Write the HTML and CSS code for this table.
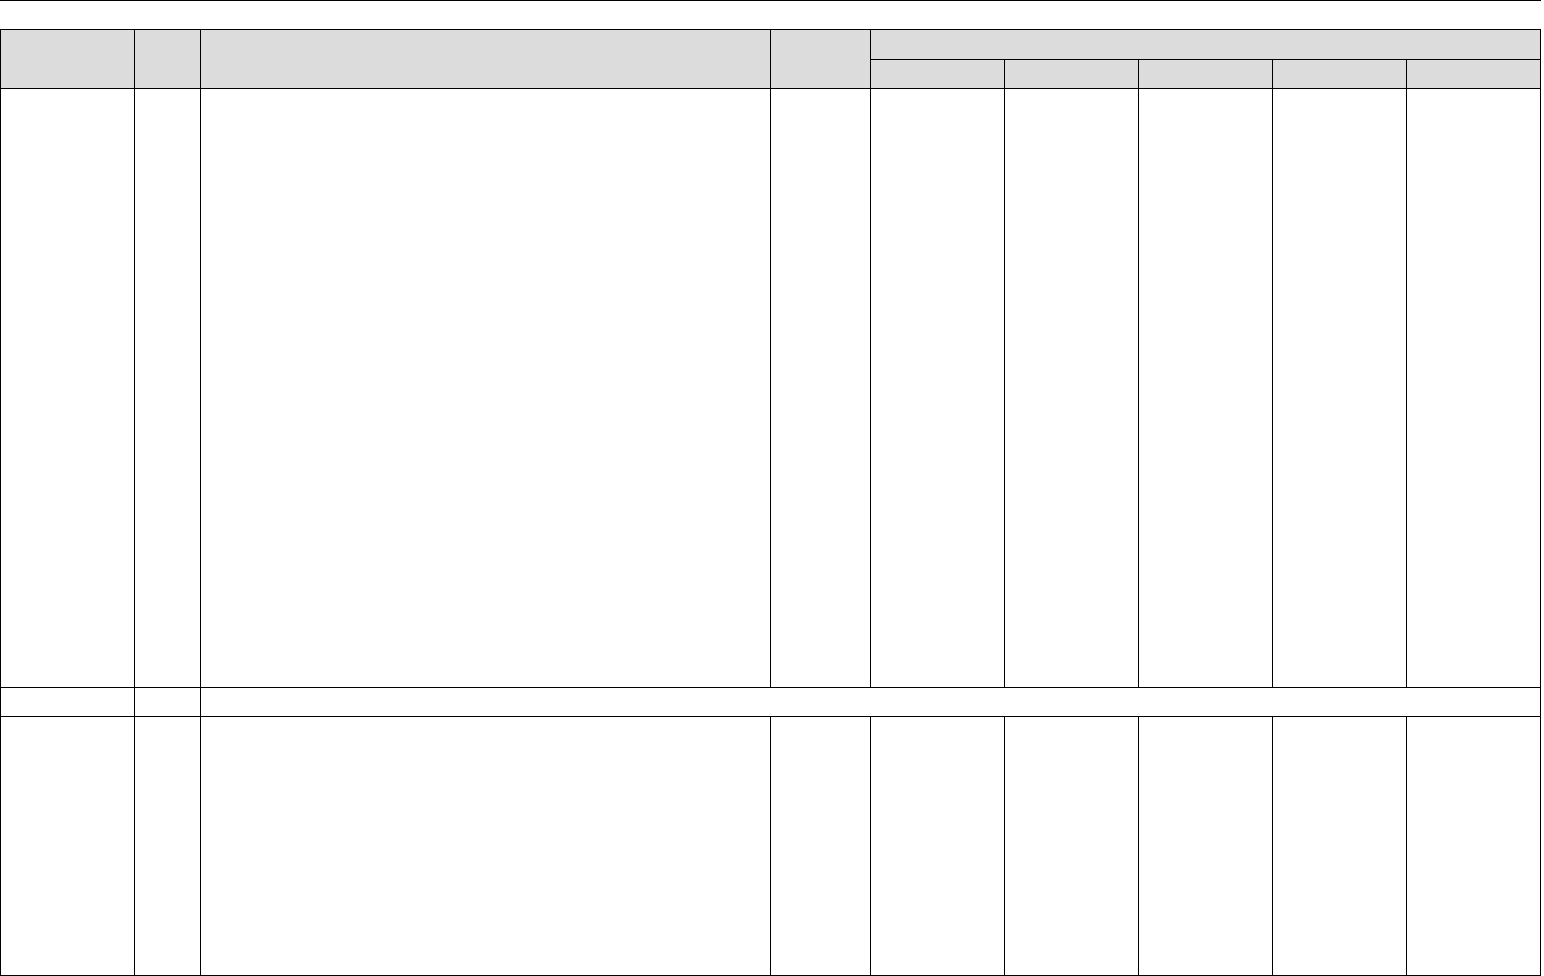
FILE: index.html
```html
<!DOCTYPE html>
<html lang="en">
<head>
  <meta charset="UTF-8">
  <meta name="viewport" content="width=device-width, initial-scale=1.0">
  <title>Sheet</title>
  <link rel="stylesheet" href="styles.css">
</head>
<body>
  <div class="rule"></div>

  <div class="sheet">
    <!-- header -->
    <div class="cell head span-rows"></div>
    <div class="cell head span-rows"></div>
    <div class="cell head span-rows"></div>
    <div class="cell head span-rows"></div>
    <div class="cell head span-group"></div>
    <div class="cell head"></div>
    <div class="cell head"></div>
    <div class="cell head"></div>
    <div class="cell head"></div>
    <div class="cell head"></div>

    <!-- first block -->
    <div class="cell"></div>
    <div class="cell"></div>
    <div class="cell"></div>
    <div class="cell"></div>
    <div class="cell"></div>
    <div class="cell"></div>
    <div class="cell"></div>
    <div class="cell"></div>
    <div class="cell"></div>

    <!-- section row -->
    <div class="cell"></div>
    <div class="cell"></div>
    <div class="cell span-wide"></div>

    <!-- second block -->
    <div class="cell"></div>
    <div class="cell"></div>
    <div class="cell"></div>
    <div class="cell"></div>
    <div class="cell"></div>
    <div class="cell"></div>
    <div class="cell"></div>
    <div class="cell"></div>
    <div class="cell"></div>
  </div>
</body>
</html>
```

FILE: styles.css
```css
body {
  margin: 0;
  font-family: "Liberation Sans", Arial, sans-serif;
  font-size: 13px;
  background: #fff;
}
.rule {
  width: 1541px;
  height: 1px;
  background: #000;
  margin-bottom: 28px;
}
.sheet {
  display: grid;
  grid-template-columns: 133px 65px 569px 99px 133px 133px 133px 133px 133px;
  grid-template-rows: 29px 28px 598px 28px 258px;
  gap: 1px;
  padding: 1px;
  width: 1539px;
  background: #000;
}
.cell {
  background: #fff;
}
.head {
  background: #dcdcdc;
}
.span-rows {
  grid-row: span 2;
}
.span-group {
  grid-column: span 5;
}
.span-wide {
  grid-column: span 7;
}
```
